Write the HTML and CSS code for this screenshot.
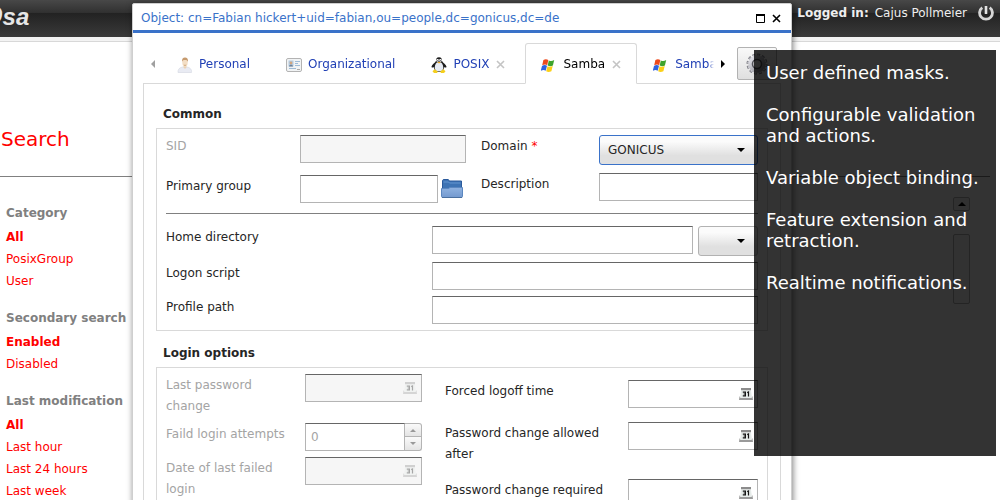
FILE: index.html
```html
<!DOCTYPE html>
<html lang="en">
<head>
<meta charset="utf-8">
<title>GOsa</title>
<link rel="stylesheet" href="styles.css">
</head>
<body>
<svg class="sprite" aria-hidden="true">
  <defs>
    <linearGradient id="g-folder" x1="0" y1="0" x2="0" y2="1"><stop offset="0" stop-color="#8fb2e0"/><stop offset="1" stop-color="#7399cf"/></linearGradient>
    <linearGradient id="g-gear" x1="0" y1="0" x2="1" y2="1"><stop offset="0" stop-color="#e4e4ea"/><stop offset="1" stop-color="#8a8a92"/></linearGradient>
    <symbol id="i-person" viewBox="0 0 16 16">
      <path d="M1 15.500c-.4-3 1.600-5 4.500-5.500h4.500c3 .5 5 2.500 4.500 5.500z" fill="#e9ebf3" stroke="#d3d6e0" stroke-width=".6"/>
      <path d="M5.800 9.500 8 12l2.200-2.500z" fill="#ecd2b4"/>
      <ellipse cx="8" cy="5.500" rx="2.700" ry="4" fill="#f3dec5"/>
      <path d="M5 5C4.700 1.800 6 .4 8 .4s3.400 1.300 3 4.600C10.400 3.400 10 3 8 3s-2.500.5-3 2z" fill="#c69a6e"/>
      <path d="M6.400 7.800h3.200L8 9.400z" fill="#d3ab82"/>
    </symbol>
    <symbol id="i-card" viewBox="0 0 16 16">
      <rect x=".5" y="1.500" width="15" height="13" rx="1.500" fill="#f1f3f4" stroke="#b3b3b3"/>
      <rect x="2.500" y="3.500" width="5" height="6" fill="#b4cbe2"/>
      <circle cx="5" cy="6" r="1.400" fill="#d2a67e"/>
      <path d="M3 9.500c0-2.400 4-2.400 4 0z" fill="#6a8099"/>
      <path d="M9 4.500h5M9 6.500h3M9 8.500h5M3 11.500h7" stroke="#9dbbd8"/>
      <path d="M11 12.500h3" stroke="#aaa"/>
    </symbol>
    <symbol id="i-tux" viewBox="0 0 16 16">
      <path d="M8 .3C5.600.3 5 2 5 4 4 6 .8 7.500.4 10c.8.800 2 .6 2.600 0 .2 3 1.500 5 5 5s4.800-2 5-5c.600.600 1.800.8 2.600 0C15.200 7.500 12 6 11 4c0-2-.6-3.700-3-3.700z" fill="#1c1c1c"/>
      <path d="M8 5C5 5 3.800 8 3.800 10.500S5 14.500 8 14.500s4.200-1.500 4.200-4S11 5 8 5z" fill="#e6eaf2"/>
      <circle cx="6.600" cy="3.400" r="1.300" fill="#fff"/><circle cx="9.400" cy="3.400" r="1.300" fill="#fff"/>
      <circle cx="6.900" cy="3.600" r=".5"/><circle cx="9.200" cy="3.600" r=".5"/>
      <path d="M6.300 4.900h3.500L8 6.600z" fill="#f1a91c"/>
      <path d="M1.500 14.200 3.600 12.200l3.200 2.400-.8 1.400H3z" fill="#f5cf1d"/>
      <path d="M14.500 14.200 12.400 12.200l-3.200 2.400.8 1.400h3z" fill="#f5cf1d"/>
    </symbol>
    <symbol id="i-win" viewBox="0 0 16 16">
      <path d="M2.400 3.100c1.700-1.100 3.200-1 4.900-.1L6.200 8.200C4.700 7.200 3.200 7.300 1.200 8.300z" fill="#ee4a1c"/>
      <path d="M7.800 3.400c1.800 1 3.400.8 5.400-.3l-1.300 5.400c-1.700 1-3.400 1.100-5.200.1z" fill="#3fa32c"/>
      <path d="M1 8.900c1.800-1 3.400-1.100 5-.1l-1.300 5c-1.600-1-3.100-.9-5 .1z" fill="#2f63e0"/>
      <path d="M6.500 9.200c1.700 1 3.500.8 5.200-.1l-1.300 5.100c-1.800 1-3.500 1.100-5.200.1z" fill="#fbd018"/>
    </symbol>
    <symbol id="i-gear" viewBox="0 0 22 22">
      <circle cx="11" cy="11" r="9.200" fill="none" stroke="#74747c" stroke-width="2.600" stroke-dasharray="2.800 2.017"/>
      <circle cx="11" cy="11" r="6.500" fill="none" stroke="url(#g-gear)" stroke-width="4.500"/>
      <circle cx="11" cy="11" r="9" fill="none" stroke="#c9c9d0" stroke-width="1.600" stroke-dasharray="1.600 3.112" stroke-dashoffset="-.6"/>
      <circle cx="11" cy="11" r="4.500" fill="#e4e4e4" stroke="#55555c" stroke-width="1.600"/>
    </symbol>
    <symbol id="i-folder" viewBox="0 0 22 20">
      <path d="M1.500 10V1.500l.8-1h5l1 1.500h12.200V11h-19z" fill="#3d73b4" stroke="#2a5a9c"/>
      <path d="M2.500 3h5l1 1h11" fill="none" stroke="#6496d0"/>
      <path d="M.5 9.500h7l1.500-1h12.500v9l-.6 1H1.100l-.6-1z" fill="url(#g-folder)" stroke="#5b87c0"/>
      <path d="M1 18.500h20" stroke="#496f9f"/>
    </symbol>
    <symbol id="i-cal" viewBox="0 0 14 13">
      <path d="M2 0h10v2.500H2z" fill="#8c8c8c"/>
      <path d="M2 2.500h10l1 7.500H1z" fill="#e6ebe9"/>
      <path d="M.6 8 0 12h14l-.6-4-.8 2H1.400z" fill="#9a9a9a"/>
      <path d="M3.800 4.100h2.600v3.800H3.800M4.600 6h1.800M8.200 4.600l1.300-.6v4.400" fill="none" stroke="#151515" stroke-width="1.200"/>
    </symbol>
    <symbol id="i-power" viewBox="0 0 16 16">
      <path d="M4.300 2.600a6.400 6.400 0 1 0 7.400 0" fill="none" stroke="#d6d6d6" stroke-width="2.800"/>
      <path d="M8 1v8" stroke="#e4e4e4" stroke-width="2.600"/>
    </symbol>
    <symbol id="i-close" viewBox="0 0 9 9"><path d="M1 1l7 7M8 1 1 8" fill="none" stroke="currentColor" stroke-width="1.600"/></symbol>
    <symbol id="i-down" viewBox="0 0 8 4"><path d="M0 0h8L4 4z" fill="currentColor"/></symbol>
    <symbol id="i-up" viewBox="0 0 8 4"><path d="M0 4h8L4 0z" fill="currentColor"/></symbol>
    <symbol id="i-left" viewBox="0 0 4 8"><path d="M4 0v8L0 4z" fill="currentColor"/></symbol>
    <symbol id="i-right" viewBox="0 0 4 8"><path d="M0 0v8l4-4z" fill="currentColor"/></symbol>
    <symbol id="i-max" viewBox="0 0 9 9"><path d="M.5.5h8v8h-8z" fill="none" stroke="#000"/><path d="M0 1h9" stroke="#000" stroke-width="2"/></symbol>
  </defs>
</svg>

<header class="topbar">
  <div class="logo"><span class="logo-big">GO</span>sa</div>
  <div class="session"><b>Logged in:</b> Cajus Pollmeier
    <button class="plain" aria-label="Log out"><svg class="icon"><use href="#i-power"/></svg></button>
  </div>
</header>
<div class="strip"></div>

<main class="search-page">
  <h1 class="search-title">Search</h1>
  <div class="results">
    <nav class="filters">
      <section>
        <h2>Category</h2>
        <a class="active" href="#">All</a><a href="#">PosixGroup</a><a href="#">User</a>
      </section>
      <section>
        <h2>Secondary search</h2>
        <a class="active" href="#">Enabled</a><a href="#">Disabled</a>
      </section>
      <section>
        <h2>Last modification</h2>
        <a class="active" href="#">All</a><a href="#">Last hour</a><a href="#">Last 24 hours</a><a href="#">Last week</a>
      </section>
    </nav>
    <div class="scrollbar">
      <button class="scroll-up" aria-label="Scroll up"><svg class="arrow-v"><use href="#i-up"/></svg></button>
      <div class="thumb"></div>
    </div>
  </div>
</main>

<div class="window" role="dialog" aria-labelledby="win-title">
  <div class="titlebar">
    <span id="win-title">Object: cn=Fabian hickert+uid=fabian,ou=people,dc=gonicus,dc=de</span>
    <span class="win-buttons">
      <button class="plain" aria-label="Maximize"><svg class="glyph"><use href="#i-max"/></svg></button>
      <button class="plain" aria-label="Close"><svg class="glyph"><use href="#i-close"/></svg></button>
    </span>
  </div>

  <div class="window-body">
    <div class="tabbar">
      <button class="plain tab-prev" aria-label="Previous tabs"><svg class="arrow-h"><use href="#i-left"/></svg></button>
      <div class="tabs">
        <button class="tab"><svg class="icon"><use href="#i-person"/></svg>Personal</button>
        <button class="tab"><svg class="icon"><use href="#i-card"/></svg>Organizational</button>
        <button class="tab"><svg class="icon"><use href="#i-tux"/></svg>POSIX<svg class="glyph tab-close"><use href="#i-close"/></svg></button>
        <button class="tab selected"><svg class="icon"><use href="#i-win"/></svg>Samba<svg class="glyph tab-close"><use href="#i-close"/></svg></button>
        <button class="tab"><svg class="icon"><use href="#i-win"/></svg>Samba</button>
      </div>
      <button class="plain tab-next" aria-label="Next tabs"><svg class="arrow-h"><use href="#i-right"/></svg></button>
      <button class="gear" aria-label="Actions"><svg class="gear-icon"><use href="#i-gear"/></svg></button>
    </div>

    <div class="page">
      <h3>Common</h3>
      <div class="group">
        <div class="columns common">
          <div class="rows left">
            <label class="disabled" for="sid">SID</label>
            <input id="sid" class="field" disabled>
            <label for="pgroup">Primary group</label>
            <div class="combo"><input id="pgroup" class="field"><button class="plain" aria-label="Browse groups"><svg class="folder"><use href="#i-folder"/></svg></button></div>
          </div>
          <div class="rows right">
            <label for="domain">Domain <span class="required">*</span></label>
            <div class="select focused"><select id="domain"><option>GONICUS</option></select><svg class="arrow-v"><use href="#i-down"/></svg></div>
            <label for="desc">Description</label>
            <input id="desc" class="field">
          </div>
        </div>
        <hr>
        <div class="rows paths">
          <label for="home">Home directory</label>
          <div class="combo wide"><input id="home" class="field"><div class="select drive"><select aria-label="Home drive"><option></option></select><svg class="arrow-v"><use href="#i-down"/></svg></div></div>
          <label for="logon">Logon script</label>
          <input id="logon" class="field">
          <label for="profile">Profile path</label>
          <input id="profile" class="field">
        </div>
      </div>

      <h3>Login options</h3>
      <div class="group">
        <div class="columns login">
          <div class="rows left">
            <label class="disabled" for="lpc">Last password change</label>
            <div class="date off"><input id="lpc" class="field" disabled><svg class="cal"><use href="#i-cal"/></svg></div>
            <label class="disabled" for="fla">Faild login attempts</label>
            <div class="spinner"><input id="fla" class="field" value="0" disabled>
              <div class="steps"><button disabled aria-label="Increase"><svg class="step-arrow"><use href="#i-up"/></svg></button><button disabled aria-label="Decrease"><svg class="step-arrow"><use href="#i-down"/></svg></button></div></div>
            <label class="disabled" for="dlf">Date of last failed login</label>
            <div class="date off"><input id="dlf" class="field" disabled><svg class="cal"><use href="#i-cal"/></svg></div>
          </div>
          <div class="rows right">
            <label for="flt">Forced logoff time</label>
            <div class="date"><input id="flt" class="field"><svg class="cal"><use href="#i-cal"/></svg></div>
            <label for="pca">Password change allowed after</label>
            <div class="date"><input id="pca" class="field"><svg class="cal"><use href="#i-cal"/></svg></div>
            <label for="pcr">Password change required</label>
            <div class="date"><input id="pcr" class="field"><svg class="cal"><use href="#i-cal"/></svg></div>
          </div>
        </div>
      </div>
    </div>
  </div>
</div>

<aside class="overlay">
  <p>User defined masks.</p>
  <p>Configurable validation and actions.</p>
  <p>Variable object binding.</p>
  <p>Feature extension and retraction.</p>
  <p>Realtime notifications.</p>
</aside>
</body>
</html>
```
FILE: styles.css
```css
* { box-sizing: border-box; }

body {
  margin: 0;
  height: 100vh;
  overflow: hidden;
  position: relative;
  background: #fff;
  color: #262626;
  font: 12px/21px "DejaVu Sans", sans-serif;
}

button, input, select { font: inherit; color: inherit; margin: 0; }
.sprite { position: absolute; width: 0; height: 0; }
svg { display: block; flex: none; }
.icon { width: 16px; height: 16px; }
.glyph { width: 9px; height: 9px; }
.arrow-v { width: 8px; height: 4px; }
.arrow-h { width: 4px; height: 8px; }
.plain { border: 0; padding: 0; background: none; }

/* Top bar */
.topbar {
  display: flex;
  justify-content: space-between;
  height: 37px;
  padding-right: 6px;
  overflow: hidden;
  background: linear-gradient(#484848, #303030 13px, #222 13px, #3a3a3a);
}
.logo {
  margin-left: -41px;
  color: #e6e6e6;
  font: italic bold 24px/32px "Liberation Sans", sans-serif;
}
.logo-big { font-size: 28px; }
.session {
  display: flex;
  align-items: center;
  gap: 6px;
  height: 26px;
  color: #eee;
}
.session .plain { margin-left: 5px; }
.strip { height: 5px; background: #f3f3f3; border-bottom: 1px solid #d8d8d8; }

/* Search page */
.search-title {
  margin: 0;
  padding: 84px 0 24px 1px;
  color: #f00;
  font-size: 20px;
  font-weight: normal;
  line-height: 26px;
}
.results {
  display: flex;
  justify-content: space-between;
  margin-right: 10px;
  padding: 25px 20px 0 6px;
  border-top: 1px solid #808080;
}
.filters { display: grid; gap: 15px; line-height: 22px; }
.filters h2 { margin: 0 0 2px; color: #808080; font-size: 12px; white-space: nowrap; }
.filters a { display: block; color: #f00; text-decoration: none; }
.filters .active { font-weight: bold; }
.scrollbar { width: 17px; margin-top: -5px; }
.scroll-up {
  display: flex;
  align-items: center;
  justify-content: center;
  width: 100%;
  height: 14px;
  padding: 0;
  border: 1px solid #b2b2b2;
  border-radius: 2px;
  background: #f4f4f4;
  color: #000;
}
.thumb { height: 70px; margin-top: 23px; border: 1px solid #b2b2b2; border-radius: 2px; background: #f8f8f8; }

/* Object window */
.window {
  position: absolute;
  top: 3px;
  left: 132px;
  right: 208px;
  background: #fff;
  border: 1px solid #cfcfcf;
  border-radius: 2px;
  box-shadow: 1px 1px 6px rgba(0, 0, 0, .5);
}
.titlebar {
  display: flex;
  align-items: center;
  justify-content: space-between;
  height: 29px;
  padding: 2px 10px 0 8px;
  border-bottom: 3px solid #3a72c9;
  color: #3a72c9;
}
.win-buttons { display: flex; gap: 7px; color: #000; }
.window-body { padding: 10px; }

.tabbar { display: flex; padding-right: 4px; }
.tab-prev { width: 18px; padding: 2px 0 0 8px; color: #a0a0a0; }
.tab-next { width: 16px; margin-left: 7px; padding-top: 2px; color: #000; }
.tabs {
  display: flex;
  flex: 1;
  height: 41px;
  margin-bottom: -1px;
  overflow: hidden;
  position: relative;
  z-index: 1;
  -webkit-mask-image: linear-gradient(to left, transparent, #000 6px);
  mask-image: linear-gradient(to left, transparent, #000 6px);
}
.tab {
  display: flex;
  flex: none;
  align-items: center;
  gap: 6px;
  margin-right: 4px;
  padding: 2px 15px 0;
  border: 1px solid transparent;
  border-radius: 3px 3px 0 0;
  background: none;
  color: #2140b5;
  white-space: nowrap;
}
.tab.selected { margin-right: 0; border-color: #d9d9d9; border-bottom-color: #fff; background: #fff; color: #000; }
.tab-close { margin-left: 1px; color: #c4c4c4; }
.gear {
  display: grid;
  place-items: center;
  width: 40px;
  height: 33px;
  margin-top: 4px;
  padding: 0;
  border: 1px solid #b2b2b2;
  border-radius: 2px;
  background: linear-gradient(#f9f9f9, #dfdfdf);
}
.gear-icon { width: 22px; height: 22px; }

.page { padding: 8px 12px; border: 1px solid #d9d9d9; }
.page h3 { margin: 0; padding: 12px 7px 3px; font-size: 12px; }
.group { padding: 6px 9px; border: 1px solid #d9d9d9; }

/* Form */
.columns { display: grid; align-items: start; }
.common { grid-template-columns: 300px 1fr; column-gap: 15px; }
.login { grid-template-columns: 256px 1fr; column-gap: 23px; }
.rows { display: grid; align-items: start; }
.common .left { grid-template-columns: 134px 1fr; row-gap: 12px; }
.common .right { grid-template-columns: 118px 1fr; row-gap: 8px; }
.paths { grid-template-columns: 266px 1fr; row-gap: 6px; }
.login .left { grid-template-columns: 139px 1fr; row-gap: 6px; }
.login .right { grid-template-columns: 183px 1fr; row-gap: 14px; padding-top: 6px; }
label { padding: 1px 10px 0 0; }
.disabled { color: #a4a4a4; }
.required { color: #f00; }
hr { height: 1px; margin: 10px 0 12px; border: 0; background: #808080; }

.field {
  width: 100%;
  min-width: 0;
  height: 28px;
  padding: 0 5px;
  border: 1px solid #b4b4b4;
  border-top-color: #666;
  background: #fff;
}
.field:disabled { background: #f6f6f6; color: #a4a4a4; }
.combo { display: flex; align-items: center; gap: 3px; }
.wide { align-items: flex-start; gap: 5px; }
.folder { width: 22px; height: 20px; }
.common .combo { padding-right: 3px; }

.select { position: relative; }
.select select {
  appearance: none;
  display: block;
  width: 100%;
  height: 30px;
  padding: 0 8px;
  border: 1px solid #b2b2b2;
  border-radius: 3px;
  background: linear-gradient(#fbfbfb 20%, #e0e0e0 70%);
}
.select .arrow-v { position: absolute; right: 13px; top: 13px; color: #000; pointer-events: none; }
.focused select { border-color: #3a72c9; }
.drive { flex: none; width: 60px; }

.date { position: relative; }
.date .cal { position: absolute; right: 5px; top: 8px; width: 14px; height: 13px; }
.off .cal { opacity: .35; }

.spinner { display: flex; }
.spinner .field { background: #fff; }
.steps { display: grid; grid-template-rows: 1fr 1fr; flex: none; width: 17px; height: 28px; }
.steps button {
  display: grid;
  place-items: center;
  padding: 0;
  border: 1px solid #b4b4b4;
  border-left: 0;
  border-radius: 0 3px 0 0;
  background: linear-gradient(#fafafa, #e4e4e4);
  color: #999;
}
.steps button + button { border-top: 0; border-radius: 0 0 3px 0; }
.step-arrow { width: 6px; height: 3px; }

/* Feature notes */
.overlay {
  position: absolute;
  top: 50px;
  right: 4px;
  bottom: 44px;
  width: 242px;
  padding: 12px;
  z-index: 2;
  background: rgba(0, 0, 0, .8);
  color: #fff;
  font-size: 18px;
}
.overlay p { margin: 0 0 21px; }
```
